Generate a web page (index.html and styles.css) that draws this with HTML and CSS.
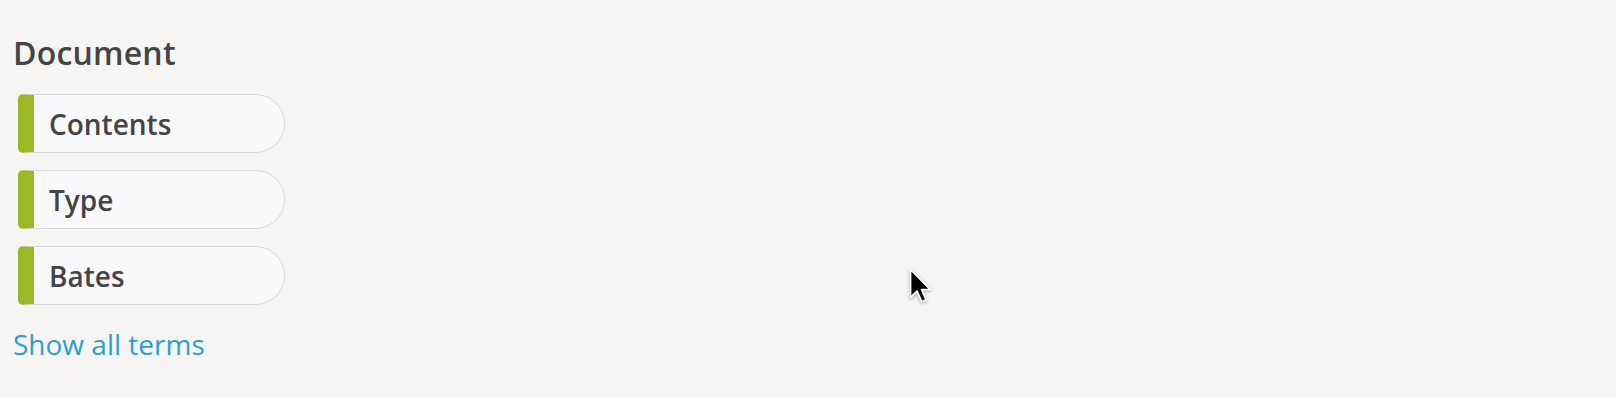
FILE: index.html
```html
<!DOCTYPE html>
<html>
   <head>
      <meta name="viewport" content="width=device-width, initial-scale=1">
      <link rel="stylesheet" href="styles.css">
   </head>
   <body>
      <div class="facets">
         <h2 class="facet-title">Document</h2>
         <ul class="terms">
            <li class="term">Contents</li>
            <li class="term">Type</li>
            <li class="term">Bates</li>
         </ul>
         <a href="javascript:void(0)" class="show-all">Show all terms</a>
      </div>
      <svg class="cursor" width="28" height="40" viewBox="0 0 24 34">
         <path d="M3 2 L3 26 L8.6 20.6 L12.6 29.6 L16.4 28 L12.6 19.2 L20 19.2 Z" fill="#000" stroke="#fff" stroke-width="1.5" stroke-linejoin="round"/>
      </svg>
   </body>
</html>
```

FILE: styles.css
```css
body {
margin: 0;
background-color: #f6f5f3;
font-family: "Open Sans", "Noto Sans", sans-serif;
color: #444;
}
.facets {
padding: 34px 13px;
}
.facet-title {
margin: 0;
font-size: 32px;
font-weight: 600;
letter-spacing: 0.2px;
line-height: 1.2;
color: #444;
}
.terms {
list-style: none;
margin: 22px 0 0 5px;
padding: 0;
display: flex;
flex-direction: column;
gap: 17px;
}
.term {
box-sizing: border-box;
width: 267px;
height: 59px;
line-height: 58px;
padding-left: 15px;
font-size: 28px;
font-weight: 600;
background-color: #f9f9fb;
border: 1px solid #d9d9d9;
border-left: 16px solid #9cb826;
border-radius: 5px 30px 30px 5px;
}
.show-all {
display: inline-block;
margin-top: 20px;
font-size: 28px;
line-height: 1.362;
color: #2a9fcf;
text-decoration: none;
}
.cursor {
position: absolute;
left: 907px;
top: 267px;
filter: drop-shadow(0 1px 1.5px rgba(0, 0, 0, 0.35));
}
```
